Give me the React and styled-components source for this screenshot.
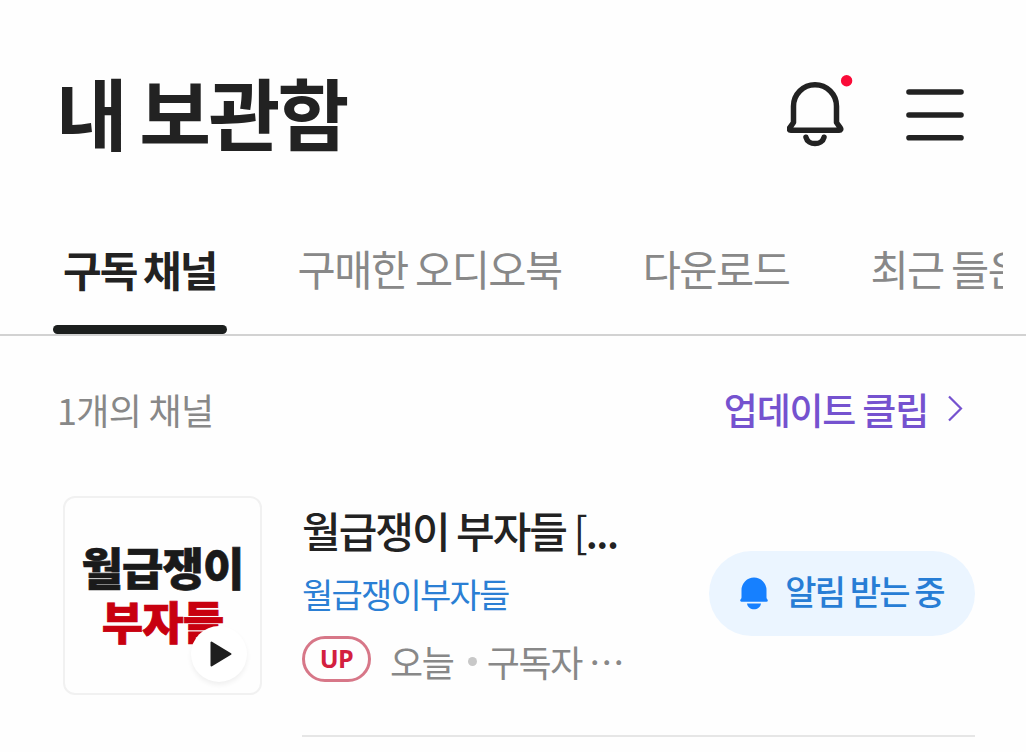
import React, { useState } from "react";
import styled, { createGlobalStyle } from "styled-components";

const GlobalStyle = createGlobalStyle`
  * {
    box-sizing: border-box;
  }

  body {
    margin: 0;
    background: #fefefe;
    font-family: "Noto Sans CJK KR", sans-serif;
  }

  button {
    font-family: inherit;
    background: none;
    border: none;
    padding: 0;
  }
`;

const Page = styled.div`
  width: 1026px;
  height: 752px;
  overflow: hidden;
  color: #222;
  white-space: nowrap;
`;

const Header = styled.header`
  height: 218px;
  padding: 0 62px 0 56px;
  display: flex;
  align-items: center;
  justify-content: space-between;
`;

const PageTitle = styled.h1`
  margin: 0;
  padding-top: 3px;
  font-size: 78px;
  line-height: 100px;
  font-weight: 700;
  letter-spacing: -2.6px;
  word-spacing: -1px;
`;

const HeaderActions = styled.div`
  display: flex;
  align-items: center;
  gap: 53px;
  padding-top: 12px;
`;

const IconButton = styled.button`
  display: flex;
`;

const Tabs = styled.nav`
  height: 118px;
  padding: 0 0 0 53px;
  border-bottom: 2px solid #d2d2d2;
`;

const TabList = styled.div`
  display: flex;
  gap: 61px;
  margin-right: 23px;
  overflow: hidden;
`;

const Tab = styled.button`
  flex: none;
  height: 116px;
  padding: 0 10px;
  display: flex;
  flex-direction: column;
  justify-content: space-between;
  font-size: ${(props) => (props.$active ? "42px" : "41.5px")};
  line-height: 101px;
  letter-spacing: ${(props) => (props.$active ? "-1.9px" : "-1.5px")};
  word-spacing: ${(props) => (props.$active ? "-1px" : "-0.5px")};
  font-weight: ${(props) => (props.$active ? 700 : 400)};
  color: ${(props) => (props.$active ? "#222" : "#888")};
`;

const TabBar = styled.span`
  height: 9px;
  margin: 0 -10px;
  align-self: stretch;
  border-radius: 5px;
  background: #1c1f1e;
`;

const Summary = styled.div`
  height: 144px;
  padding: 0 62px 0 57px;
  display: flex;
  align-items: center;
  justify-content: space-between;
`;

const Count = styled.span`
  padding-top: 2px;
  font-size: 36px;
  letter-spacing: -0.7px;
  color: #888;
`;

const UpdateLink = styled.button`
  padding-top: 2px;
  display: flex;
  align-items: center;
  gap: 19px;
  font-size: 37px;
  font-weight: 500;
  letter-spacing: -1.2px;
  color: #7552cf;
`;

const ChannelRow = styled.article`
  display: flex;
  margin: 16px 51px 0 63px;
`;

const Cover = styled.div`
  position: relative;
  flex: none;
  width: 199px;
  height: 199px;
  padding-top: 42px;
  border: 2px solid #f1f1f1;
  border-radius: 12px;
  text-align: center;
`;

const CoverLine = styled.div`
  font-size: 45px;
  line-height: 54px;
  font-weight: 900;
  letter-spacing: -0.9px;
  color: ${(props) => props.$color};
  -webkit-text-stroke: 0.7px ${(props) => props.$color};
`;

const PlayBadge = styled.span`
  position: absolute;
  right: 13px;
  bottom: 11px;
  width: 56px;
  height: 56px;
  padding-left: 4px;
  border-radius: 50%;
  background: #fff;
  box-shadow: 0 3px 5px rgba(0, 0, 0, 0.06);
  display: flex;
  align-items: center;
  justify-content: center;
`;

const Details = styled.div`
  flex: 1;
  height: 241px;
  margin-left: 40px;
  display: flex;
  justify-content: space-between;
  align-items: flex-start;
  border-bottom: 2px solid #e6e6e6;
`;

const Info = styled.div`
  width: 340px;
`;

const ChannelTitle = styled.h2`
  margin: 0;
  font-size: 42px;
  line-height: 67px;
  font-weight: 500;
  letter-spacing: -2px;
`;

const Bracket = styled.span`
  font-weight: 400;
`;

const Author = styled.div`
  font-size: 34px;
  line-height: 62px;
  letter-spacing: -1.8px;
  color: #2b7fd4;
`;

const Meta = styled.div`
  height: 68px;
  display: flex;
  align-items: center;
  font-size: 36px;
  letter-spacing: -1.3px;
  color: #888;
`;

const MetaText = styled.span`
  padding-top: 4px;
`;

const UpBadge = styled.span`
  width: 69px;
  height: 46px;
  margin-right: 19px;
  padding-bottom: 1px;
  border: 3px solid #d77788;
  border-radius: 23px;
  display: flex;
  align-items: center;
  justify-content: center;
  font: 700 25px/1 "Open Sans", sans-serif;
  letter-spacing: -0.5px;
  color: #d3203f;
`;

const Dot = styled.span`
  width: 9px;
  height: 9px;
  margin: 4px 10px 0 14px;
  border-radius: 50%;
  background: #c8c8c8;
`;

const AlarmButton = styled.button`
  width: 266px;
  height: 85px;
  margin-top: 55px;
  border-radius: 43px;
  background: #ebf5ff;
  display: flex;
  align-items: center;
  justify-content: center;
  gap: 17px;
  color: #277dd5;
`;

const AlarmLabel = styled.span`
  padding-bottom: 6px;
  font-size: 34px;
  font-weight: 500;
  letter-spacing: -1.9px;
`;

const BellIcon = () => (
  <svg width="66" height="80" viewBox="0 0 66 80" fill="none">
    <path
      d="M6.500 31.200a21.500 21.500 0 0 1 43 0V47.500l3.800 5.300c1 1.400.4 2.500-1.100 2.500H3.800c-1.500 0-2.100-1.100-1.100-2.500l3.800-5.300Z"
      stroke="#222"
      strokeWidth="5.500"
      strokeLinejoin="round"
    />
    <path
      d="M19 62.300c2 8.400 16 8.400 18 0"
      stroke="#222"
      strokeWidth="5.500"
      strokeLinecap="round"
    />
    <circle cx="59.600" cy="5.700" r="5.700" fill="#fa0b38" />
  </svg>
);

const MenuIcon = () => (
  <svg width="58" height="52" viewBox="0 0 58 52">
    <path
      d="M3 3h52M3 26h52M3 48.700h52"
      stroke="#222"
      strokeWidth="5.600"
      strokeLinecap="round"
    />
  </svg>
);

const ChevronIcon = () => (
  <svg width="17" height="28" viewBox="0 0 17 28" fill="none">
    <path d="M2 1.500 14 13.500 2 25.500" stroke="#7552cf" strokeWidth="2.200" />
  </svg>
);

const PlayIcon = () => (
  <svg width="22" height="26" viewBox="0 0 22 26">
    <path
      d="M1.500 1.500v23L20.500 13Z"
      fill="#1e1e1e"
      stroke="#1e1e1e"
      strokeWidth="2"
      strokeLinejoin="round"
    />
  </svg>
);

const AlarmIcon = () => (
  <svg width="28" height="33" viewBox="0 0 28 33" fill="#1680ff">
    <path d="M1.500 13a12.500 12.500 0 0 1 25 0v7.500c0 1.300 1.300 2 1.300 3 0 .8-.5 1.200-1.200 1.200H1.400c-.7 0-1.200-.4-1.200-1.200 0-1 1.300-1.700 1.300-3Z" />
    <path d="M7 26.500h14c-.9 7.700-13.100 7.700-14 0Z" />
  </svg>
);

const tabs = ["구독 채널", "구매한 오디오북", "다운로드", "최근 들은"];

const App = () => {
  const [activeTab, setActiveTab] = useState(0);

  return (
    <Page>
      <GlobalStyle />
      <Header>
        <PageTitle>내 보관함</PageTitle>
        <HeaderActions>
          <IconButton>
            <BellIcon />
          </IconButton>
          <IconButton>
            <MenuIcon />
          </IconButton>
        </HeaderActions>
      </Header>

      <Tabs>
        <TabList>
          {tabs.map((tab, index) => (
            <Tab
              key={tab}
              $active={index === activeTab}
              onClick={() => setActiveTab(index)}
            >
              {tab}
              {index === activeTab && <TabBar />}
            </Tab>
          ))}
        </TabList>
      </Tabs>

      <Summary>
        <Count>1개의 채널</Count>
        <UpdateLink>
          업데이트 클립
          <ChevronIcon />
        </UpdateLink>
      </Summary>

      <ChannelRow>
        <Cover>
          <CoverLine $color="#1a1a1a">월급쟁이</CoverLine>
          <CoverLine $color="#c8000f">부자들</CoverLine>
          <PlayBadge>
            <PlayIcon />
          </PlayBadge>
        </Cover>
        <Details>
          <Info>
            <ChannelTitle>
              월급쟁이 부자들 <Bracket>[</Bracket>...
            </ChannelTitle>
            <Author>월급쟁이부자들</Author>
            <Meta>
              <UpBadge>UP</UpBadge>
              <MetaText>오늘</MetaText>
              <Dot />
              <MetaText>구독자 ⋯</MetaText>
            </Meta>
          </Info>
          <AlarmButton>
            <AlarmIcon />
            <AlarmLabel>알림 받는 중</AlarmLabel>
          </AlarmButton>
        </Details>
      </ChannelRow>
    </Page>
  );
};

export default App;
